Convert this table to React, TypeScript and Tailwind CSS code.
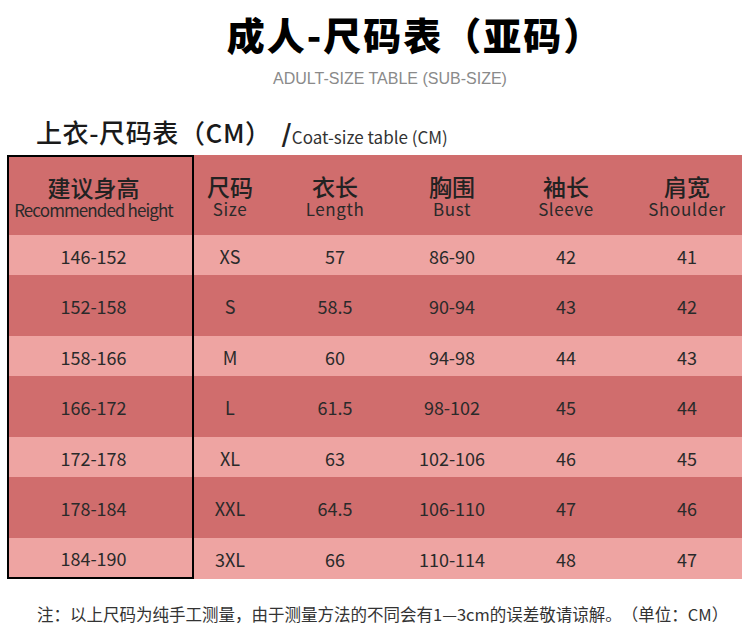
const rows = [
    ["146-152", "XS", "57", "86-90", "42", "41"],
    ["152-158", "S", "58.5", "90-94", "43", "42"],
    ["158-166", "M", "60", "94-98", "44", "43"],
    ["166-172", "L", "61.5", "98-102", "45", "44"],
    ["172-178", "XL", "63", "102-106", "46", "45"],
    ["178-184", "XXL", "64.5", "106-110", "47", "46"],
    ["184-190", "3XL", "66", "110-114", "48", "47"],
];

const widths = ["w-[187px]", "w-[72px]", "w-[138px]", "w-[96px]", "w-[132px]", "w-[110px]"];

const headers = [
    { cn: "建议身高", en: "Recommended height", tight: true },
    { cn: "尺码", en: "Size" },
    { cn: "衣长", en: "Length" },
    { cn: "胸围", en: "Bust" },
    { cn: "袖长", en: "Sleeve" },
    { cn: "肩宽", en: "Shoulder" },
];

export default function App() {
    return (
        <div className="w-[750px] h-[643px] overflow-hidden bg-white font-['Noto_Sans_CJK_SC','Noto_Sans',sans-serif] text-[#2a2a2a] [text-spacing-trim:space-all]">
            <div className="flex flex-col items-center">
                <h1 className="mt-[15px] pl-[80px] text-[38px] font-black leading-none tracking-[2px] text-black">
                    成人-尺码表（亚码）
                </h1>
                <p className="mt-[18px] pl-[30px] font-['Liberation_Sans',sans-serif] text-[16px] leading-none text-[#8a8a8a]">
                    ADULT-SIZE TABLE (SUB-SIZE)
                </p>
            </div>

            <div className="mt-[32px] flex items-end pl-[36px]">
                <span className="text-[26px] font-medium leading-none tracking-[0.6px] text-[#1a1a1a]">上衣-尺码表（CM）</span>
                <span className="ml-[10px] mb-[-7px] font-['Liberation_Sans',sans-serif] text-[33px] leading-none text-[#222]">/</span>
                <span className="ml-[1px] text-[17px] leading-none text-[#333]">Coat-size table (CM)</span>
            </div>

            <div className="mt-[10px] ml-[7px] w-[735px]">
                <div className="flex h-[80px] bg-[#d06d6d]">
                    {headers.map((h, i) => (
                        <div
                            key={h.cn}
                            className={`${widths[i]} flex flex-col items-center justify-center pt-[2px] ${i === 0 ? "border-x-2 border-t-2 border-black pr-[14px]" : ""}`}
                        >
                            <span className="text-[23px] font-medium leading-none text-[#222]">{h.cn}</span>
                            <span
                                className={`mt-[2px] text-[17px] leading-none text-[#2a2a2a] ${h.tight ? "tracking-[-0.9px]" : "tracking-[0.6px]"}`}
                            >
                                {h.en}
                            </span>
                        </div>
                    ))}
                </div>

                {rows.map((r, ri) => {
                    const light = ri % 2 === 0;
                    const last = ri === rows.length - 1;
                    return (
                        <div
                            key={r[0]}
                            className={`flex ${light ? "bg-[#eea4a2]" : "bg-[#d06d6d]"} ${last ? "h-[41px]" : light ? "h-[40px]" : "h-[61px]"}`}
                        >
                            {r.map((v, ci) => (
                                <div
                                    key={ci}
                                    className={`${widths[ci]} flex items-center justify-center pt-[1px] text-[18px] leading-none ${ci === 0 ? `border-x-2 border-black pr-[14px] ${last ? "border-b-2" : ""}` : ""}`}
                                >
                                    {v}
                                </div>
                            ))}
                        </div>
                    );
                })}
            </div>

            <p className="mt-[27px] pl-[37px] text-[16.5px] leading-none text-[#333]">
                注：以上尺码为纯手工测量，由于测量方法的不同会有1—3cm的误差敬请谅解。（单位：CM）
            </p>
        </div>
    );
}
